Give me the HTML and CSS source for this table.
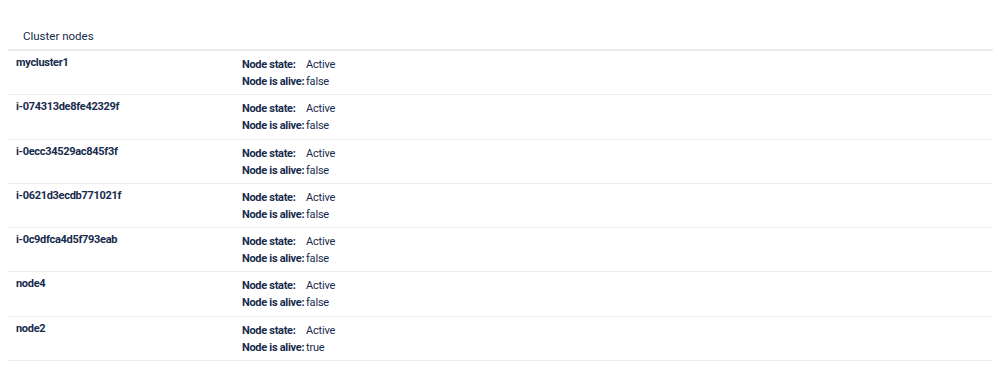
FILE: index.html
```html
<!DOCTYPE html>
<html>
<head>
<meta charset="utf-8">
<link rel="stylesheet" href="styles.css">
</head>
<body>
<div class="panel">
  <div class="title">Cluster nodes</div>
  <div class="list">
    <div class="row"><div class="name">mycluster1</div><div class="details"><span class="label">Node state:</span><span class="value">Active</span><span class="label">Node is alive:</span><span class="value">false</span></div></div>
    <div class="row"><div class="name">i-074313de8fe42329f</div><div class="details"><span class="label">Node state:</span><span class="value">Active</span><span class="label">Node is alive:</span><span class="value">false</span></div></div>
    <div class="row"><div class="name">i-0ecc34529ac845f3f</div><div class="details"><span class="label">Node state:</span><span class="value">Active</span><span class="label">Node is alive:</span><span class="value">false</span></div></div>
    <div class="row"><div class="name">i-0621d3ecdb771021f</div><div class="details"><span class="label">Node state:</span><span class="value">Active</span><span class="label">Node is alive:</span><span class="value">false</span></div></div>
    <div class="row"><div class="name">i-0c9dfca4d5f793eab</div><div class="details"><span class="label">Node state:</span><span class="value">Active</span><span class="label">Node is alive:</span><span class="value">false</span></div></div>
    <div class="row"><div class="name">node4</div><div class="details"><span class="label">Node state:</span><span class="value">Active</span><span class="label">Node is alive:</span><span class="value">false</span></div></div>
    <div class="row"><div class="name">node2</div><div class="details"><span class="label">Node state:</span><span class="value">Active</span><span class="label">Node is alive:</span><span class="value">true</span></div></div>
  </div>
</div>
</body>
</html>
```
FILE: styles.css
```css
html, body {
  margin: 0;
  padding: 0;
  background: #ffffff;
}
body {
  font-family: Roboto, "Noto Sans", sans-serif;
  color: #172b4d;
  font-size: 11px;
}
.panel {
  margin: 0 5px 0 8px;
  padding-top: 27px;
}
.title {
  font-size: 11.5px;
  padding-left: 15px;
  line-height: 18px;
  padding-bottom: 4px;
  border-bottom: 2px solid #ebecf0;
}
.row {
  display: grid;
  grid-template-columns: 226px 1fr;
  padding: 5px 8px 4.3px 8px;
  border-bottom: 1px solid #ebecf0;
}
.name {
  font-weight: 700;
  line-height: 17px;
  margin-top: -2px;
  letter-spacing: -0.3px;
}
.details {
  display: grid;
  grid-template-columns: 64px auto;
  justify-content: start;
  line-height: 17px;
  white-space: nowrap;
}
.label {
  font-weight: 700;
  letter-spacing: -0.3px;
}
.value {
  font-weight: 400;
  letter-spacing: -0.2px;
}
```
